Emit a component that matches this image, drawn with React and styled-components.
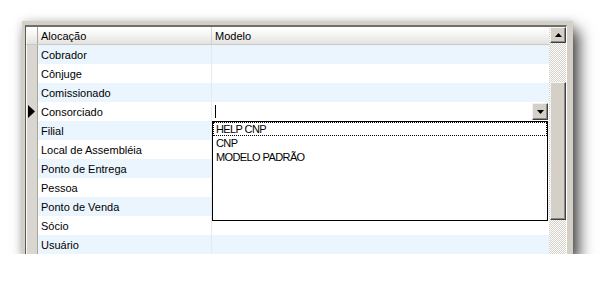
import React from "react";
import styled, { createGlobalStyle } from "styled-components";

const Global = createGlobalStyle`
  html, body { margin: 0; padding: 0; background: #ffffff; }
  body { font-family: "Liberation Sans", Arial, sans-serif; font-size: 11px; color: #000; }
`;

const Frame = styled.div`
  box-sizing: border-box;
  margin: 21px 0 0 22px;
  width: 551px;
  height: 233px;
  background: #d4d0c8;
  padding: 4px 6px 0 3px;
  display: flex;
  box-shadow: 6px 9px 14px rgba(0, 0, 0, 0.72), 0 0 8px rgba(0, 0, 0, 0.15);
`;

const Panel = styled.div`
  flex: 1;
  display: flex;
  border-top: 2px solid #6f6e6a;
  border-left: 1px solid #5a5955;
  border-right: 1px solid #ffffff;
  overflow: hidden;
`;

const Grid = styled.div`
  position: relative;
  width: 523px;
  display: flex;
  flex-direction: column;
  background: #fff;
`;

const Row = styled.div`
  box-sizing: border-box;
  display: grid;
  grid-template-columns: 12px 174px 1fr;
  height: ${(p) => (p.$header ? 18 : 19)}px;
  line-height: ${(p) => (p.$header ? 17 : 19)}px;
  background: ${(p) =>
    p.$header
      ? "linear-gradient(#ffffff, #f5f5f4 45%, #e3e2df)"
      : p.$alt
      ? "#ebf5fd"
      : "#ffffff"};
  border-bottom: ${(p) => (p.$header ? "1px solid #c9c8c4" : "none")};
  white-space: nowrap;
`;

const Indicator = styled.div`
  box-sizing: border-box;
  border-left: 1px solid #fafafa;
  border-right: 1px solid #a7a59f;
  background: ${(p) => (p.$header ? "transparent" : "#d9d6cf")};
  display: flex;
  align-items: center;
  justify-content: flex-start;
  padding-left: 1px;
`;

const Cell = styled.div`
  box-sizing: border-box;
  padding: 1px 0 0 3px;
  border-right: ${(p) => (p.$divider ? `1px solid ${p.$header ? "#d2d1cd" : "#e6eaee"}` : "none")};
  overflow: hidden;
`;

const EditCell = styled.div`
  display: flex;
  align-items: center;
  justify-content: space-between;
  padding: 0 1px 0 3px;
`;

const Caret = styled.div`
  width: 1px;
  height: 13px;
  background: #000;
`;

const DropButton = styled.div`
  box-sizing: border-box;
  width: 16px;
  height: 17px;
  background: #d4d0c8;
  border-top: 1px solid #f2f1ed;
  border-left: 1px solid #f2f1ed;
  border-right: 1px solid #404040;
  border-bottom: 1px solid #404040;
  box-shadow: inset -1px -1px 0 #8c8a85;
  display: flex;
  align-items: center;
  justify-content: center;
`;

const List = styled.div`
  position: absolute;
  left: 186px;
  top: 94px;
  width: 336px;
  height: 100px;
  box-sizing: border-box;
  border: 1px solid #000;
  background: #fff;
`;

const Item = styled.div`
  box-sizing: border-box;
  height: 14px;
  line-height: 13px;
  padding-left: 2px;
  letter-spacing: -0.6px;
  border: 1px ${(p) => (p.$focus ? "dotted #000" : "solid transparent")};
`;

const Scroll = styled.div`
  width: 17px;
  display: flex;
  flex-direction: column;
  background: repeating-conic-gradient(#d4d0c8 0 25%, #ffffff 0 50%) 0 0 / 2px 2px;
`;

const ScrollButton = styled.div`
  box-sizing: border-box;
  margin-left: 1px;
  height: 16px;
  background: #d4d0c8;
  border-top: 1px solid #f4f3ef;
  border-left: 1px solid #f4f3ef;
  border-right: 1px solid #404040;
  border-bottom: 1px solid #404040;
  box-shadow: inset -1px -1px 0 #8c8a85;
  display: flex;
  align-items: center;
  justify-content: center;
`;

const Track = styled.div`
  height: ${(p) => p.$h}px;
  flex: ${(p) => (p.$grow ? 1 : "none")};
`;

const Thumb = styled.div`
  box-sizing: border-box;
  margin-left: 1px;
  height: 138px;
  background: #d4d0c8;
  border-top: 1px solid #f4f3ef;
  border-left: 1px solid #f4f3ef;
  border-right: 1px solid #404040;
  border-bottom: 1px solid #404040;
  box-shadow: inset -1px -1px 0 #8c8a85;
`;

const Arrow = ({ dir }) => (
  <svg width="7" height="4" viewBox="0 0 7 4">
    {dir === "up" ? <polygon points="3.5,0 7,4 0,4" fill="#000" /> : <polygon points="0,0 7,0 3.5,4" fill="#000" />}
  </svg>
);

const Pointer = () => (
  <svg width="7" height="13" viewBox="0 0 7 13">
    <polygon points="0,0 7,6.5 0,13" fill="#000" />
  </svg>
);

const rows = [
  "Cobrador",
  "Cônjuge",
  "Comissionado",
  "Consorciado",
  "Filial",
  "Local de Assembléia",
  "Ponto de Entrega",
  "Pessoa",
  "Ponto de Venda",
  "Sócio",
  "Usuário",
];

export default function App() {
  return (
    <>
      <Global />
      <Frame>
        <Panel>
          <Grid>
            <Row $header>
              <Indicator $header />
              <Cell $divider $header>Alocação</Cell>
              <Cell $header>Modelo</Cell>
            </Row>
            {rows.map((name, i) => {
              const current = name === "Consorciado";
              return (
                <Row key={name} $alt={i % 2 === 0}>
                  <Indicator>{current && <Pointer />}</Indicator>
                  <Cell $divider>{name}</Cell>
                  {current ? (
                    <EditCell>
                      <Caret />
                      <DropButton>
                        <Arrow dir="down" />
                      </DropButton>
                    </EditCell>
                  ) : (
                    <Cell />
                  )}
                </Row>
              );
            })}
            <List>
              <Item $focus>HELP CNP</Item>
              <Item>CNP</Item>
              <Item>MODELO PADRÃO</Item>
            </List>
          </Grid>
          <Scroll>
            <ScrollButton>
              <Arrow dir="up" />
            </ScrollButton>
            <Track $h={39} />
            <Thumb />
            <Track $grow />
          </Scroll>
        </Panel>
      </Frame>
    </>
  );
}
